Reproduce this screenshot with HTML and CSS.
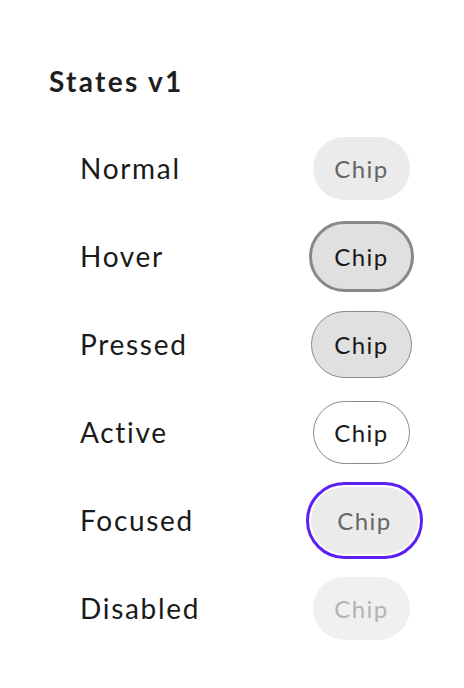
FILE: index.html
```html
<!DOCTYPE html>
<html lang="en">
<head>
    <meta charset="UTF-8">
    <meta name="viewport" content="width=device-width, initial-scale=1.0">
    <title>Chip States</title>
    <link rel="stylesheet" href="styles.css">
</head>
<body>
    <div class="states-panel">
        <h2 class="states-title">States v1</h2>

        <div class="state-list">
            <div class="state-row">
                <span class="state-label">Normal</span>
                <div class="chip-cell"><span class="chip chip-normal">Chip</span></div>
            </div>
            <div class="state-row">
                <span class="state-label">Hover</span>
                <div class="chip-cell"><span class="chip chip-hover">Chip</span></div>
            </div>
            <div class="state-row">
                <span class="state-label">Pressed</span>
                <div class="chip-cell"><span class="chip chip-pressed">Chip</span></div>
            </div>
            <div class="state-row">
                <span class="state-label">Active</span>
                <div class="chip-cell"><span class="chip chip-active">Chip</span></div>
            </div>
            <div class="state-row">
                <span class="state-label">Focused</span>
                <div class="chip-cell"><span class="chip chip-focused">Chip</span></div>
            </div>
            <div class="state-row">
                <span class="state-label">Disabled</span>
                <div class="chip-cell"><span class="chip chip-disabled">Chip</span></div>
            </div>
        </div>
    </div>
</body>
</html>
```

FILE: styles.css
```css
* {
    margin: 0;
    padding: 0;
    box-sizing: border-box;
}

body {
    font-family: Lato, 'Noto Sans', Arial, sans-serif;
    background: #ffffff;
    color: #1a1a1a;
}

.states-panel {
    padding: 65px 43px 0 49px;
}

.states-title {
    font-size: 28px;
    line-height: 32px;
    font-weight: 700;
    letter-spacing: 2.3px;
    color: #1e1e1e;
    margin-bottom: 27px;
}

.state-list {
    padding-left: 31px;
}

.state-row {
    display: grid;
    grid-template-columns: 1fr 120px;
    align-items: center;
    height: 88px;
}

.state-label {
    font-size: 28px;
    letter-spacing: 1.7px;
    color: #1a1a1a;
}

.chip-cell {
    display: flex;
    justify-content: center;
    align-items: center;
}

.chip {
    display: flex;
    align-items: center;
    justify-content: center;
    width: 97px;
    height: 63px;
    padding-left: 1px;
    border-radius: 999px;
    font-size: 24px;
    letter-spacing: 1.5px;
    background: #ebebeb;
    color: #666666;
}

.chip-hover {
    width: 105px;
    height: 71px;
    background: #e0e0e0;
    border: 3px solid #888888;
    color: #1a1a1a;
}

.chip-pressed {
    width: 101px;
    height: 67px;
    background: #e0e0e0;
    border: 1px solid #8a8a8a;
    color: #1a1a1a;
}

.chip-active {
    background: #ffffff;
    border: 1px solid #8a8a8a;
    color: #1a1a1a;
}

.chip-focused {
    width: 107px;
    height: 67px;
    margin-left: 6px;
    outline: 3px solid #5a1ff2;
    outline-offset: 2px;
}

.chip-disabled {
    background: #f0f0f0;
    color: #b3b3b3;
}
```
